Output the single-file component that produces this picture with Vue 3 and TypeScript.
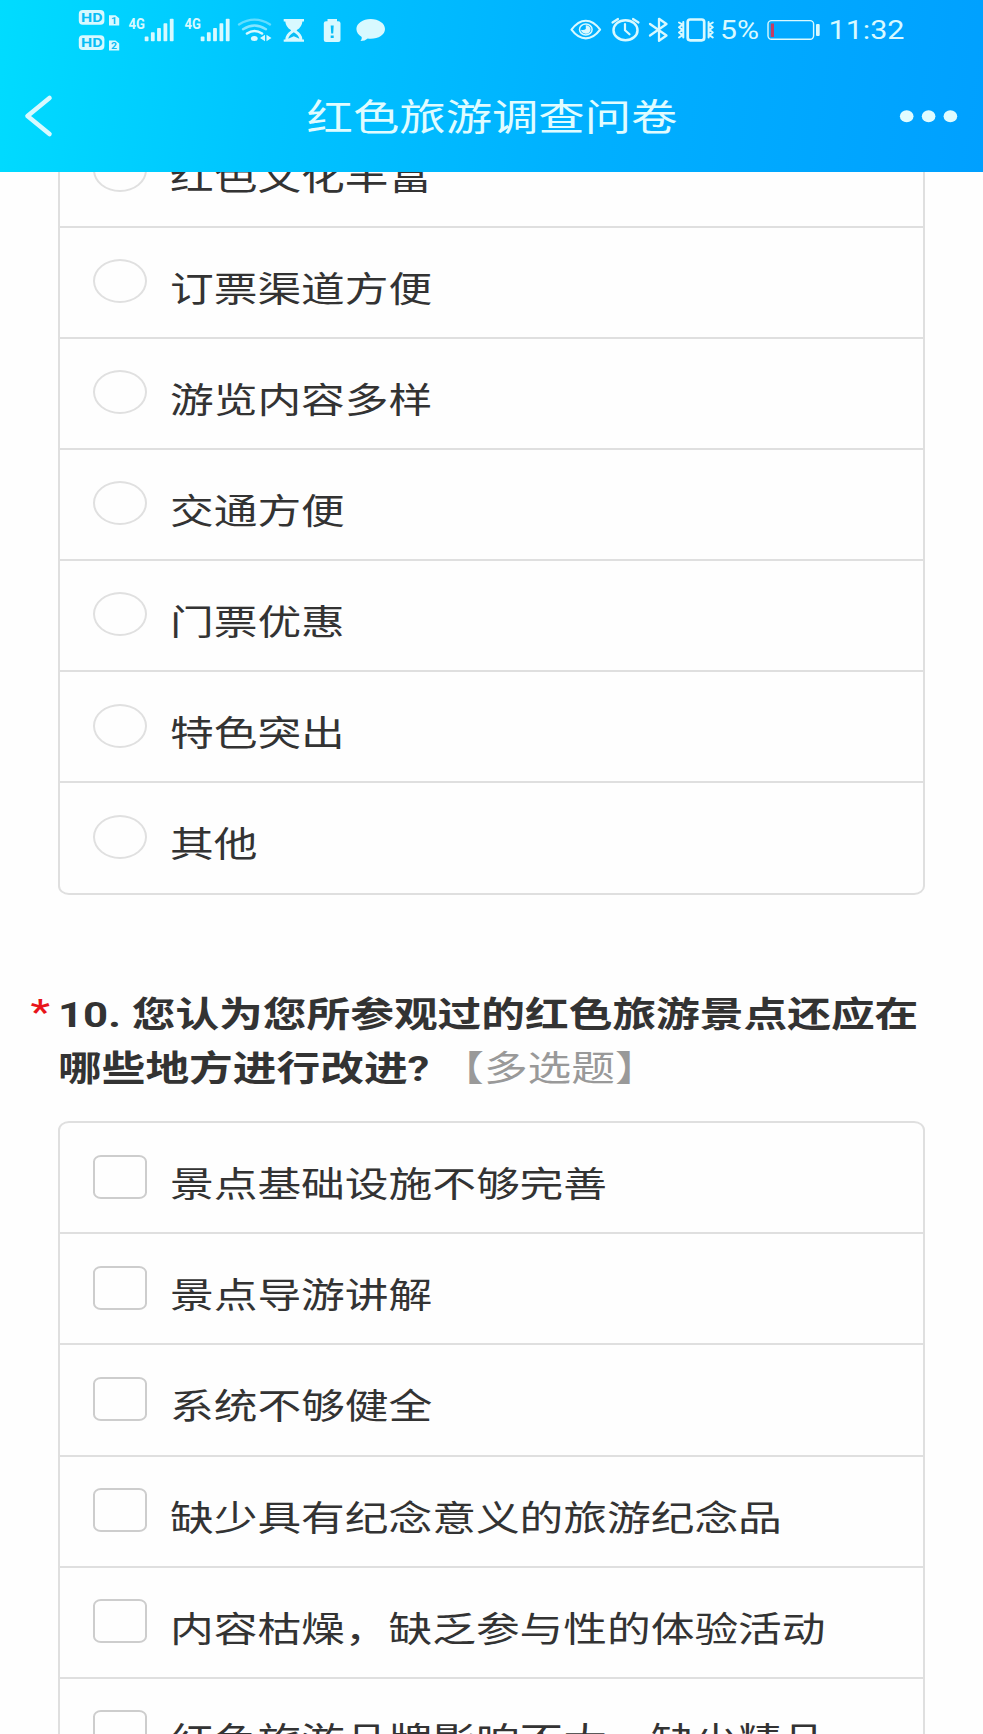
<script setup lang="ts">
interface Question {
  number: number
  text: string
  kind: string
}

const title: string = '红色旅游调查问卷'

const singleOptions: string[] = [
  '红色文化丰富',
  '订票渠道方便',
  '游览内容多样',
  '交通方便',
  '门票优惠',
  '特色突出',
  '其他',
]

const question: Question = {
  number: 10,
  text: '您认为您所参观过的红色旅游景点还应在哪些地方进行改进?',
  kind: '【多选题】',
}

const multiOptions: string[] = [
  '景点基础设施不够完善',
  '景点导游讲解',
  '系统不够健全',
  '缺少具有纪念意义的旅游纪念品',
  '内容枯燥，缺乏参与性的体验活动',
  '红色旅游品牌影响不大，缺少精品',
]

const signalBars: { x: number; y: number }[] = [
  { x: 16.7, y: 36.6 },
  { x: 22.9, y: 32.3 },
  { x: 29.1, y: 28 },
  { x: 35.5, y: 23.3 },
  { x: 41.8, y: 18.7 },
]
</script>

<template>
  <div class="screen">
    <header class="header">
      <div class="status">
        <div class="status-group">
          <svg class="ic" width="50" height="60" viewBox="78 0 50 60">
            <g v-for="n in 2" :key="n" :transform="`translate(0 ${(n - 1) * 25.2})`">
              <rect x="78.8" y="10" width="25.6" height="14.8" rx="4" />
              <text class="cut" x="81" y="22.3" font-size="13.5" textLength="21.5" lengthAdjust="spacingAndGlyphs">HD</text>
              <path d="M109 15.2h6.5l3.7 3v7.2H109z" />
              <text class="cut" x="111" y="24" font-size="9.5" textLength="6" lengthAdjust="spacingAndGlyphs">{{ n }}</text>
            </g>
          </svg>
          <svg v-for="s in 2" :key="s" class="ic" width="55.5" height="60" viewBox="0 0 55.5 60">
            <text x="0.6" y="29" font-size="14.6" textLength="16.4" lengthAdjust="spacingAndGlyphs">4G</text>
            <rect v-for="b in signalBars" :key="b.x" :x="b.x" :y="b.y" width="3.8" :height="41.3 - b.y" rx="0.8" />
          </svg>
          <svg class="ic" width="38" height="60" viewBox="239 0 38 60">
            <g class="line" stroke-width="2.4">
              <path opacity=".45" d="M239 24.4q15.500-9.500 31 0" />
              <path opacity=".6" d="M243 29.200q11.500-7.500 23 0" />
              <path stroke-width="2.600" d="M247 33.500q7.500-5 15 0" />
            </g>
            <ellipse cx="254.300" cy="38.500" rx="3.400" ry="2.500" />
            <path d="M265 34.800v6.400l-5-3.200zM266.500 34.800v6.400l5-3.200z" />
          </svg>
          <svg class="ic" width="36" height="60" viewBox="277 0 36 60">
            <path d="M283.700 19h20.300v2.400h-1.600q-.5 5.600-5.600 8.600v.8q5.100 3 5.600 8.600h1.600v2.400h-20.300v-2.400h1.600q.5-5.600 5.600-8.600v-.8q-5.100-3-5.600-8.600h-1.600z" />
            <path class="cut" d="M288.200 38.800q.8-3.800 5.600-6.600q4.800 2.800 5.600 6.600l-5.600-2.500z" />
          </svg>
          <svg class="ic" width="36" height="60" viewBox="313 0 36 60">
            <path d="M327.500 19h9.500v2.200h1.300q2.200 0 2.200 2v16.800q0 2-2.200 2h-12.300q-2.200 0-2.200-2v-16.800q0-2 2.200-2h1.500z" />
            <path class="cut" d="M330.700 25.500h3l-.5 8h-2zM330.700 35.500h3v2.500h-3z" />
          </svg>
          <svg class="ic" width="40" height="60" viewBox="349 0 40 60">
            <path d="M370.700 19c7.900 0 14.300 4.400 14.300 10s-6.400 9.800-14.300 9.800q-1.700 0-3-.2q-2.700 2.500-7.200 2.500q1.700-2 1.200-4.200c-3.300-1.800-5.300-4.600-5.300-7.900c0-5.600 6.400-10 14.300-10z" />
          </svg>
        </div>
        <div class="status-group">
          <svg class="ic" width="38" height="60" viewBox="568 0 38 60">
            <path class="line" stroke-width="2.100" d="M571.500 29.700q6.500-9 14.300-9t14.300 9q-6.500 8.700-14.300 8.700t-14.300-8.700z" />
            <ellipse class="line" stroke-width="1.500" cx="585.800" cy="29.500" rx="6.300" ry="5.400" />
            <path d="M585.800 25.300a4.800 4.200 0 1 1-4.800 4.400q2.800 .8 4.800-.6z" />
          </svg>
          <svg class="ic" width="38" height="60" viewBox="606 0 38 60">
            <ellipse class="line" stroke-width="2.500" cx="625.500" cy="30.200" rx="12" ry="10" />
            <path class="line" stroke-width="2.200" d="M625 24v6.300l4.500 4M612.500 22.500l5.500-3.500M638.500 22.500l-5.500-3.500" />
          </svg>
          <svg class="ic" width="30" height="60" viewBox="644 0 30 60">
            <path class="line" stroke-width="2.300" d="M650 24l16.500 11.500l-7.500 5.300v-22l7.500 5.200l-16.500 11.500" />
          </svg>
          <svg class="ic" width="46" height="60" viewBox="674 0 46 60">
            <rect class="line" stroke-width="2.700" x="687.700" y="19.500" width="16.500" height="20.800" rx="2.500" />
            <path class="line" stroke-width="2" d="M679 22.500l3.500 2.200l-3.500 2.600l3.500 2.600l-3.500 2.600l3.500 2.600l-3.500 2.400M683.300 22v15.500M712.800 22.500l-3.500 2.200l3.500 2.600l-3.500 2.600l3.500 2.600l-3.500 2.600l3.500 2.400M708.600 22v15.500" />
          </svg>
          <svg class="ic" width="44" height="60" viewBox="720 0 44 60">
            <text class="num" x="720" y="39.300" font-size="25" textLength="39" lengthAdjust="spacingAndGlyphs">5%</text>
          </svg>
          <svg class="ic" width="60" height="60" viewBox="764 0 60 60">
            <rect class="line" stroke-width="1.400" x="768" y="20.600" width="45.600" height="18.600" rx="3.500" />
            <rect class="low" x="770.800" y="23.500" width="3.200" height="13.500" />
            <rect x="816" y="24" width="3.700" height="12" rx="1" />
          </svg>
          <svg class="ic" width="84" height="60" viewBox="824 0 84 60">
            <text class="num" x="828.500" y="39.300" font-size="25" textLength="76" lengthAdjust="spacingAndGlyphs">11:32</text>
          </svg>
        </div>
      </div>
      <div class="nav">
        <svg class="ic" width="60" height="60" viewBox="0 0 60 60">
          <path class="line" stroke-width="4.600" d="M49.500 12L27.500 30L49.500 48" />
        </svg>
        <h1 class="title"><span>{{ title }}</span></h1>
        <svg class="ic" width="60" height="60" viewBox="0 0 60 60">
          <ellipse v-for="cx in [6.700, 28.600, 50.400]" :key="cx" :cx="cx" cy="30.300" rx="6.800" ry="6" />
        </svg>
      </div>
    </header>

    <main class="content">
      <ul class="options first">
        <li v-for="o in singleOptions" :key="o" class="option">
          <span class="radio"></span>
          <span class="label">{{ o }}</span>
        </li>
      </ul>

      <section class="question">
        <span class="required">*</span>
        <p class="question-text">
          <b>{{ question.number }}. {{ question.text }}</b> <span class="kind">{{ question.kind }}</span>
        </p>
      </section>

      <ul class="options">
        <li v-for="o in multiOptions" :key="o" class="option">
          <span class="checkbox"></span>
          <span class="label">{{ o }}</span>
        </li>
      </ul>
    </main>
  </div>
</template>

<style>
body {
  margin: 0;
  background: #fefefe;
}
</style>

<style scoped>
.screen {
  width: 983px;
  height: 1734px;
  overflow: hidden;
  display: flex;
  flex-direction: column;
  background: #fefefe;
  color: #333;
  font-family: Roboto, "Noto Sans CJK SC", sans-serif;
}

.header {
  flex: none;
  height: 172px;
  background: linear-gradient(98deg, #00dcff 0%, #00c4ff 28%, #00b0ff 60%, #00a0ff 100%);
}

.status {
  height: 60px;
  display: flex;
  justify-content: space-between;
  padding: 0 75px 0 78px;
}

.status-group {
  display: flex;
}

.ic {
  display: block;
  flex: none;
  overflow: visible;
  fill: #d8f9ff;
}

.ic text {
  font-family: Roboto, sans-serif;
  font-weight: 700;
}

.ic text.num {
  font-weight: 400;
}

.ic .cut {
  fill: #08bdf5;
}

.ic .low {
  fill: #c43c62;
}

.ic .line {
  fill: none;
  stroke: #d8f9ff;
  stroke-linecap: round;
  stroke-linejoin: round;
}

.nav {
  height: 112px;
  display: flex;
  align-items: center;
  justify-content: space-between;
  padding-right: 23px;
}

.nav .ic {
  fill: #e0fcff;
}

.title {
  margin: 6px 0 0 23px;
  font-size: 37px;
  line-height: 60px;
  font-weight: 400;
  color: #e0fcff;
}

.title span {
  display: inline-block;
  transform: scaleX(1.253);
}

.content {
  flex: 1;
  min-height: 0;
  overflow: hidden;
}

.options {
  list-style: none;
  margin: 0 58px;
  padding: 0;
  border: 2px solid #dfdfdf;
  border-radius: 11px / 9px;
}

.options.first {
  margin-top: -57.600px;
}

.option {
  box-sizing: border-box;
  height: 111.150px;
  display: flex;
  align-items: flex-start;
  padding: 31.500px 0 0 33.300px;
  border-bottom: 2px solid #dfdfdf;
}

.option:last-child {
  height: 109.300px;
  border-bottom: 0;
}

.radio,
.checkbox {
  box-sizing: border-box;
  flex: none;
  width: 54px;
  height: 44px;
  border: 2px solid #e0e0e0;
  border-radius: 50%;
}

.checkbox {
  border-color: #cdcdcd;
  border-radius: 8px / 6.500px;
}

.label {
  margin: 4.500px 0 0 22.300px;
  font-size: 35.500px;
  line-height: 52px;
  white-space: nowrap;
  transform: scaleX(1.231);
  transform-origin: left;
}

.question {
  display: flex;
  align-items: flex-start;
  box-sizing: border-box;
  height: 226.600px;
  padding: 93.500px 0 0 30px;
}

.required {
  width: 28px;
  margin-top: -3px;
  padding-left: 0.500px;
  box-sizing: border-box;
  color: #e8141a;
  font-size: 35.500px;
  font-weight: 500;
  line-height: 54px;
  transform: scaleX(1.231);
  transform-origin: left;
}

.question-text {
  flex: none;
  width: 703px;
  margin: 0;
  font-size: 35.500px;
  line-height: 54px;
  transform: scaleX(1.231);
  transform-origin: left;
}

.kind {
  color: #999;
}
</style>
